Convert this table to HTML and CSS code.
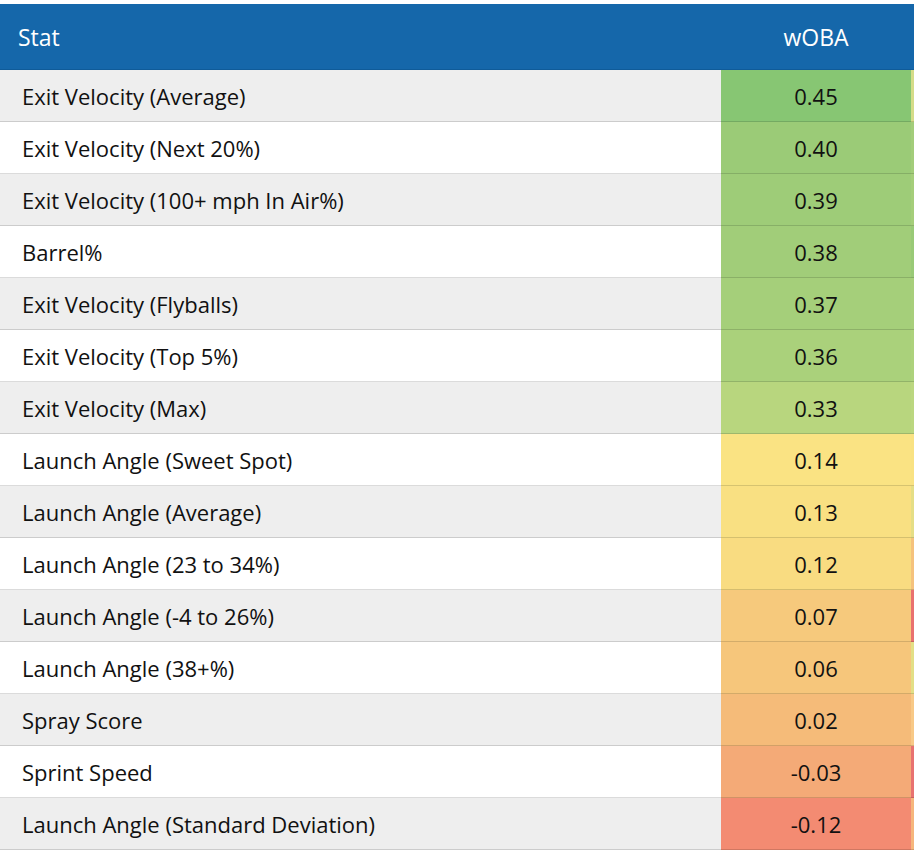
FILE: index.html
```html
<!DOCTYPE html>
<html>
<head>
<meta charset="utf-8">
<link rel="stylesheet" href="styles.css">
</head>
<body>
<div class="wrap">
<table class="stats">
  <colgroup>
    <col class="col-stat">
    <col class="col-val">
    <col class="col-next">
  </colgroup>
  <thead>
    <tr><th class="c-stat">Stat</th><th class="c-val">wOBA</th><th class="c-next"></th></tr>
  </thead>
  <tbody>
    <tr><td class="c-stat">Exit Velocity (Average)</td><td class="c-val" style="background:#87c673">0.45</td><td class="c-next" style="background:#d5dc88"></td></tr>
    <tr><td class="c-stat">Exit Velocity (Next 20%)</td><td class="c-val" style="background:#9bcb77">0.40</td><td class="c-next" style="background:#a3cd7a"></td></tr>
    <tr><td class="c-stat">Exit Velocity (100+ mph In Air%)</td><td class="c-val" style="background:#9ecc78">0.39</td><td class="c-next" style="background:#a5ce7a"></td></tr>
    <tr><td class="c-stat">Barrel%</td><td class="c-val" style="background:#a1cd79">0.38</td><td class="c-next" style="background:#99ca77"></td></tr>
    <tr><td class="c-stat">Exit Velocity (Flyballs)</td><td class="c-val" style="background:#a5cf7a">0.37</td><td class="c-next" style="background:#a8cf7b"></td></tr>
    <tr><td class="c-stat">Exit Velocity (Top 5%)</td><td class="c-val" style="background:#aad17b">0.36</td><td class="c-next" style="background:#add27c"></td></tr>
    <tr><td class="c-stat">Exit Velocity (Max)</td><td class="c-val" style="background:#b8d67e">0.33</td><td class="c-next" style="background:#bbd780"></td></tr>
    <tr><td class="c-stat">Launch Angle (Sweet Spot)</td><td class="c-val" style="background:#fae383">0.14</td><td class="c-next" style="background:#f9e283"></td></tr>
    <tr><td class="c-stat">Launch Angle (Average)</td><td class="c-val" style="background:#f9e082">0.13</td><td class="c-next" style="background:#e5de86"></td></tr>
    <tr><td class="c-stat">Launch Angle (23 to 34%)</td><td class="c-val" style="background:#f9dc81">0.12</td><td class="c-next" style="background:#f5c27d"></td></tr>
    <tr><td class="c-stat">Launch Angle (-4 to 26%)</td><td class="c-val" style="background:#f6c97c">0.07</td><td class="c-next" style="background:#e9716f"></td></tr>
    <tr><td class="c-stat">Launch Angle (38+%)</td><td class="c-val" style="background:#f6c67b">0.06</td><td class="c-next" style="background:#e3df86"></td></tr>
    <tr><td class="c-stat">Spray Score</td><td class="c-val" style="background:#f5bb79">0.02</td><td class="c-next" style="background:#f8c987"></td></tr>
    <tr><td class="c-stat">Sprint Speed</td><td class="c-val" style="background:#f4aa77">-0.03</td><td class="c-next" style="background:#e87270"></td></tr>
    <tr><td class="c-stat">Launch Angle (Standard Deviation)</td><td class="c-val" style="background:#f38b72">-0.12</td><td class="c-next" style="background:#f6b67c"></td></tr>
  </tbody>
</table>
</div>
</body>
</html>
```

FILE: styles.css
```css
html, body {
  margin: 0;
  padding: 0;
  background: #ffffff;
}
body {
  padding-top: 4px;
  font-family: "Open Sans", "Liberation Sans", sans-serif;
  color: #111;
}
.wrap {
  width: 914px;
  overflow: hidden;
}
.stats {
  border-collapse: collapse;
  table-layout: fixed;
  width: 1000px;
}
.col-stat {
  width: 721px;
}
.col-val {
  width: 190px;
}
.col-next {
  width: 89px;
}
.stats th {
  background: #1567aa;
  color: #ffffff;
  font-weight: 400;
  font-size: 23px;
  height: 65px;
  padding: 0;
  border-bottom: 1px solid #0f5b99;
}
.stats th.c-stat {
  text-align: left;
  padding-left: 18px;
}
.c-val {
  text-align: center;
}
.stats td {
  height: 51px;
  padding: 0;
  font-size: 22px;
  border-bottom: 1px solid rgba(0, 0, 0, 0.14);
}
.stats td.c-stat {
  padding-left: 22px;
}
.stats tbody tr:nth-child(odd) td.c-stat {
  background: #eeeeee;
}
.stats tbody tr:nth-child(even) td.c-stat {
  background: #ffffff;
}
```
